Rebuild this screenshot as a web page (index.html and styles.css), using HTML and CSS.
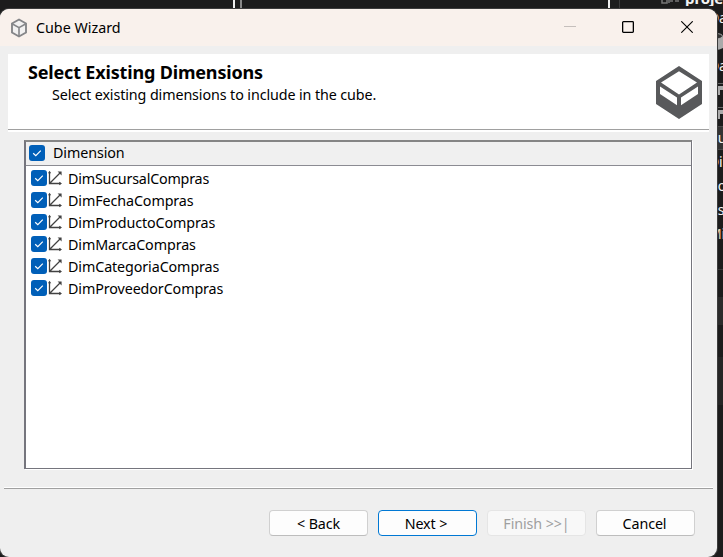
FILE: index.html
```html
<!DOCTYPE html>
<html lang="en">
<head>
<meta charset="utf-8">
<title>Cube Wizard</title>
<link rel="stylesheet" href="styles.css">
</head>
<body>
<svg width="0" height="0" class="defs">
  <symbol id="check" viewBox="0 0 16 16"><rect width="16" height="16" rx="3" fill="#005fb8"/><path d="M4.2 8.2 6.8 10.7 11.8 5.6" fill="none" stroke="#fff" stroke-width="1.2"/></symbol>
  <symbol id="axes" viewBox="0 0 14 16"><path d="M1.5 2.5V13.5H13M1.5 13.5 12 3" fill="none" stroke="#424242" stroke-width="1.3"/><path d="M1.5 .8 3.2 3.2H0zM9.6 1.4h4v4zM11.2 11.8 14 13.5 11.2 15.2z" fill="#424242"/></symbol>
</svg>
<div class="desktop">
  <div class="editor"><i class="split"></i><i class="split dim"></i></div>
  <div class="explorer">
    <div class="solution"><svg width="20" height="5" viewBox="0 0 20 5"><path d="M1 0v3h5V0M8 0v3M9 1h3M14 1h4" fill="none" stroke="#777" stroke-width="1.5"/></svg><span>project</span></div>
    <div class="node">Da</div>
    <div class="node"><svg width="14" height="18" viewBox="0 0 14 18"><path d="M0 3v12q7 4 14 0V3z" fill="#aaa"/><ellipse cx="7" cy="3.2" rx="6.5" ry="2.7" fill="#333" stroke="#aaa"/></svg></div>
    <div class="node">Da</div>
    <div class="node"><svg width="14" height="14"><path d="M0 .5h14" stroke="#666"/><path d="M1 3h13v4h-3v5H1z" fill="#aaa"/></svg></div>
    <div class="node"><svg width="14" height="14"><path d="M0 .5h14" stroke="#666"/><path d="M1 3h13v4h-3v5H1z" fill="#aaa"/></svg></div>
    <div class="node selected">Cu</div>
    <div class="node">Di</div>
    <div class="node">Co</div>
    <div class="node">As</div>
    <div class="node warm">Mi</div>
    <div class="panes"><i class="pane one"></i><i class="pane two"></i></div>
  </div>
</div>
<main class="dialog">
  <header class="titlebar">
    <svg class="appicon" width="18" height="20" viewBox="0 0 18 20"><path d="M9 1.5 16 5.5v9L9 18.5 2 14.5v-9z" fill="#f2f1f1" stroke="#858689" stroke-width="1.9"/><path d="M2.5 6 9 9.7 15.5 6M9 9.7V18" fill="none" stroke="#858689" stroke-width="1.6"/></svg>
    <span class="apptitle">Cube Wizard</span>
    <div class="controls">
      <svg width="12" height="12"><path d="M0 5.5h12" stroke="#c5bfbc"/></svg>
      <svg width="12" height="12"><rect x=".65" y=".65" width="10.7" height="10.7" rx=".8" fill="none" stroke="#000" stroke-width="1.3"/></svg>
      <svg width="12" height="12"><path d="M.3.3 11.7 11.7M11.7.3.3 11.7" stroke="#000" stroke-width="1.1"/></svg>
    </div>
  </header>
  <section class="banner">
    <div>
      <h1>Select Existing Dimensions</h1>
      <p>Select existing dimensions to include in the cube.</p>
    </div>
    <svg class="logo" width="46" height="53" viewBox="0 0 46 53"><path fill="#58595b" fill-rule="evenodd" d="M23 0 46 15V38L23 53 0 38V15zM23 5.2 5 16.6 23 28.5 41 16.6zM4 20.5V28L21 39.3V31.5zM42 20.5V28L25 39.3V31.5z"/></svg>
  </section>
  <section class="list">
    <div class="listhead"><svg width="16" height="16"><use href="#check"/></svg><span>Dimension</span></div>
    <div class="rows">
      <div class="row"><svg width="16" height="16"><use href="#check"/></svg><svg width="14" height="16"><use href="#axes"/></svg><span class="tight">DimSucursalCompras</span></div>
      <div class="row"><svg width="16" height="16"><use href="#check"/></svg><svg width="14" height="16"><use href="#axes"/></svg><span>DimFechaCompras</span></div>
      <div class="row"><svg width="16" height="16"><use href="#check"/></svg><svg width="14" height="16"><use href="#axes"/></svg><span>DimProductoCompras</span></div>
      <div class="row"><svg width="16" height="16"><use href="#check"/></svg><svg width="14" height="16"><use href="#axes"/></svg><span>DimMarcaCompras</span></div>
      <div class="row"><svg width="16" height="16"><use href="#check"/></svg><svg width="14" height="16"><use href="#axes"/></svg><span>DimCategoriaCompras</span></div>
      <div class="row"><svg width="16" height="16"><use href="#check"/></svg><svg width="14" height="16"><use href="#axes"/></svg><span>DimProveedorCompras</span></div>
    </div>
  </section>
  <footer class="actions">
    <button>&lt; Back</button>
    <button class="primary">Next &gt;</button>
    <button class="finish" disabled>Finish &gt;&gt;|</button>
    <button class="cancel">Cancel</button>
  </footer>
</main>
</body>
</html>
```
FILE: styles.css
```css
* { box-sizing: border-box; }
body { margin: 0; width: 723px; height: 557px; position: relative; overflow: hidden; background: #1e1e1e; font: 14.3px/20px "Noto Sans", "Open Sans", sans-serif; letter-spacing: -.1px; color: #000; }
svg { display: block; flex: none; }
.defs { position: absolute; }
.desktop { display: flex; height: 557px; }
.editor { width: 610px; padding: 0 0 0 233px; display: flex; gap: 5px; border-right: 2px solid #eee; background: #1c1c1c; }
.split { width: 2px; background: #eee; }
.split.dim { background: #888; }
.explorer { flex: 1; overflow: hidden; margin-left: 9px; border-left: 1px solid #3c3c3c; background: #1c1c1c; color: #f3f3f3; font-size: 14px; }
.solution { height: 6px; padding-left: 41px; display: flex; gap: 4px; overflow: hidden; }
.solution span { margin-top: -12px; font-weight: 700; font-size: 15px; }
.node { height: 24px; padding-left: 89px; display: flex; align-items: center; line-height: 18px; }
.node.selected { background: #333; border: 1px solid #484848; border-width: 1px 0; }
.node.warm { color: #ecd2ac; }
.panes { margin-top: 23px; border-top: 1px solid #383838; padding-top: 6px; display: flex; flex-direction: column; gap: 32px; }
.pane { height: 28px; margin-top: 21px; background: #2b2b2b; }
.pane.two { height: 48px; margin-top: 0; background: #252525; }
.dialog { position: absolute; left: 0; top: 9px; width: 717px; height: 548px; background: #efefef; border-radius: 9px; overflow: hidden; box-shadow: 0 0 0 1px #3c3c3c; }
.titlebar { height: 37px; background: #f9f1ec; padding-left: 10px; display: flex; align-items: center; }
.apptitle { margin-left: 8px; letter-spacing: 0; }
.controls { margin-left: auto; display: flex; gap: 46px; padding: 0 24px 1px 0; }
.controls svg:first-child, .controls svg:nth-child(2) { position: relative; left: -1px; }
.banner { height: 76px; margin: 8px 8px 0; padding: 8px 7px 0 20px; background: #fff; border-bottom: 1px solid #a0a0a0; box-shadow: 0 2px #fff; display: flex; justify-content: space-between; }
h1 { margin: 0; font-size: 18px; line-height: 20px; letter-spacing: -.17px; }
p { margin: 3px 0 0 24px; line-height: 20px; }
.logo { margin-top: 4px; }
.list { margin: 10px 25px 0 24px; height: 329px; background: #fff; border: 2px solid #75757d; border-top-color: #858585; border-right-width: 1px; border-bottom-width: 1px; box-shadow: 1px 1px #fff; }
.listhead { height: 24px; display: flex; align-items: center; padding: 0 0 2px 3px; gap: 8px; background: #f0f0f0; border-bottom: 1px solid #8b8b92; }
.rows { padding: 1px 0 0 5px; }
.row { height: 22px; display: flex; align-items: center; }
.row svg + svg { margin-left: 1px; }
.row span { margin-left: 6px; padding-top: 2px; }
.row .tight { letter-spacing: -.2px; }
.actions { margin: 19px 4px 0; border-top: 1px solid #a0a0a0; box-shadow: 0 -1px #fff; padding: 21px 18px 0 0; display: flex; justify-content: flex-end; gap: 10px; }
button { width: 99px; height: 26px; padding: 1px 0 0; border: 1px solid #d0d0d0; border-bottom-color: #bdbdbd; border-radius: 4px; background: #fdfdfd; font: inherit; letter-spacing: inherit; color: #000; line-height: 23px; }
.primary { border-color: #0078d4; padding-right: 3px; }
.cancel { padding-right: 2px; }
.finish { color: #9f9f9f; border-color: #e5e5e5; background: #f8f8f8; }
```
